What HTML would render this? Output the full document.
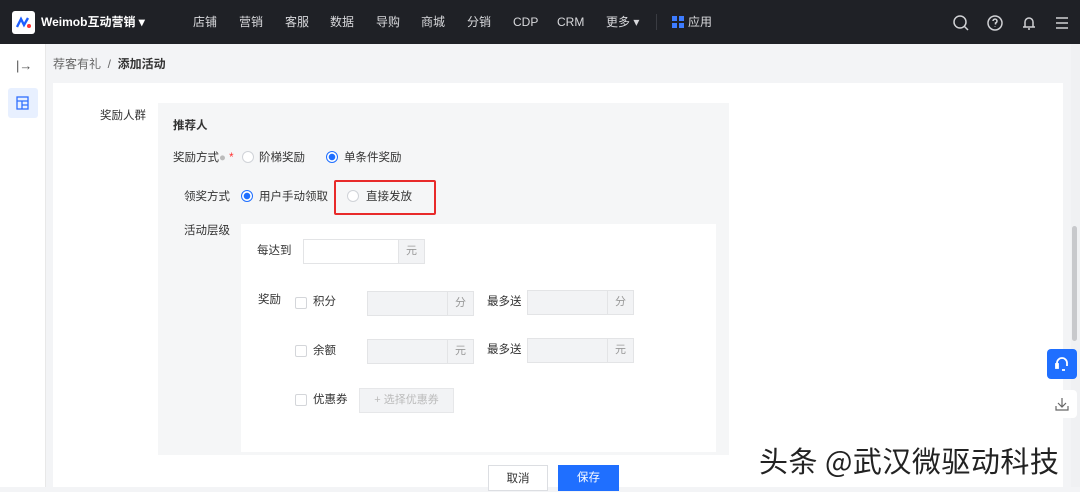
<!DOCTYPE html>
<html><head><meta charset="utf-8"><style>
*{margin:0;padding:0;box-sizing:border-box}
body{width:1080px;height:487px;overflow:hidden;background:#f3f4f6;font-family:"Liberation Sans","Noto Sans CJK SC",sans-serif;font-size:12px;color:#333;position:relative;line-height:14px}
.abs{position:absolute}
.nav{left:0;top:0;width:1080px;height:44px;background:#1f2126;color:#d8d9dc;font-size:12px}
.nav span{position:absolute;top:15px}
.side{left:0;top:44px;width:46px;height:443px;background:#fff;border-right:1px solid #e8e8e8}
.card{left:53px;top:83px;width:1010px;height:404px;background:#fff}
.panel{left:158px;top:103px;width:571px;height:352px;background:#f5f6f7}
.inner{left:241px;top:224px;width:475px;height:228px;background:#fff}
.radio{width:12px;height:12px;border-radius:50%;border:1px solid #d0d3d8;background:#fff}
.radio.on{border-color:#1f6fff;background:radial-gradient(circle,#1f6fff 0 3px,#fff 3.5px)}
.cb{width:12px;height:12px;border:1px solid #d4d6da;background:#fff;border-radius:2px}
.inp{height:25px;border:1px solid #e3e4e6;background:#f2f3f5}
.unit{position:absolute;right:0;top:0;width:26px;height:23px;border-left:1px solid #e3e4e6;color:#999;text-align:center;line-height:23px;font-size:11px;background:#f2f3f5}
.t{font-size:11.5px;color:#333}
</style></head><body>
<div class="abs nav">
 <div class="abs" style="left:12px;top:11px;width:23px;height:23px;background:#fff;border-radius:3px"><svg width="23" height="23"><path d="M5 16 L9 8 L12 14 L16 7" stroke="#1f5fff" stroke-width="2.4" fill="none"/><circle cx="17" cy="15" r="2" fill="#f33"/></svg></div>
 <span style="left:41px;color:#fff;font-weight:bold">Weimob互动营销 ▾</span>
 <span style="left:193px">店铺</span><span style="left:239px">营销</span><span style="left:285px">客服</span><span style="left:330px">数据</span><span style="left:376px">导购</span><span style="left:421px">商城</span><span style="left:467px">分销</span><span style="left:513px">CDP</span><span style="left:557px">CRM</span><span style="left:606px">更多 ▾</span>
 <div class="abs" style="left:656px;top:14px;width:1px;height:16px;background:#3a3c42"></div>
 <svg class="abs" style="left:672px;top:16px" width="12" height="12"><rect x="0" y="0" width="5" height="5" fill="#3d7cff"/><rect x="7" y="0" width="5" height="5" fill="#3d7cff"/><rect x="0" y="7" width="5" height="5" fill="#3d7cff"/><rect x="7" y="7" width="5" height="5" fill="#3d7cff"/></svg>
 <span style="left:688px">应用</span>
 <svg class="abs" style="left:952px;top:14px" width="120" height="18" fill="none" stroke="#d0d1d4" stroke-width="1.5"><circle cx="8" cy="8" r="6"/><path d="M12.5 12.5 L16 16"/><circle cx="43" cy="9" r="7"/><path d="M41 7a2 2 0 1 1 2.5 2v1.5M43 12.5v.5"/><path d="M71 13h12M73 13V8a4 4 0 0 1 8 0v5M76 15h2"/><path d="M104 4h12M104 9h12M104 14h12"/></svg>
</div>
<div class="abs side">
 <div class="abs" style="left:16px;top:15px;font-size:13px;color:#555">|→</div>
 <div class="abs" style="left:8px;top:44px;width:30px;height:30px;background:#e8f0ff;border-radius:3px"><svg width="30" height="30" fill="none" stroke="#2f6fff" stroke-width="1.3"><rect x="9" y="9" width="11" height="12"/><path d="M9 13h11M14 13v8M14 17h6"/></svg></div>
</div>
<div class="abs" style="left:53px;top:57px;color:#666;font-size:12px">荐客有礼 &nbsp;/&nbsp; <b style="color:#333">添加活动</b></div>
<div class="abs card"></div>
<div class="abs t" style="left:100px;top:109px">奖励人群</div>
<div class="abs panel"></div>
<div class="abs t" style="left:173px;top:119px;font-weight:bold">推荐人</div>
<div class="abs t" style="left:173px;top:151px">奖励方式<span style="color:#bbb">●</span> <span style="color:#f33">*</span></div>
<div class="abs radio" style="left:242px;top:151px"></div><div class="abs t" style="left:259px;top:151px">阶梯奖励</div>
<div class="abs radio on" style="left:326px;top:151px"></div><div class="abs t" style="left:344px;top:151px">单条件奖励</div>
<div class="abs t" style="left:184px;top:190px">领奖方式</div>
<div class="abs radio on" style="left:241px;top:190px"></div><div class="abs t" style="left:259px;top:190px">用户手动领取</div>
<div class="abs" style="left:334px;top:180px;width:102px;height:35px;border:2px solid #e82a2a;border-radius:2px"></div>
<div class="abs radio" style="left:347px;top:190px"></div><div class="abs t" style="left:366px;top:190px">直接发放</div>
<div class="abs t" style="left:184px;top:224px">活动层级</div>
<div class="abs inner"></div>
<div class="abs t" style="left:257px;top:244px">每达到</div>
<div class="abs inp" style="left:303px;top:239px;width:122px;background:#fff"><div class="unit">元</div></div>
<div class="abs t" style="left:258px;top:293px">奖励</div>
<div class="abs cb" style="left:295px;top:297px"></div><div class="abs t" style="left:313px;top:295px">积分</div>
<div class="abs inp" style="left:367px;top:291px;width:107px"><div class="unit">分</div></div>
<div class="abs t" style="left:487px;top:295px">最多送</div>
<div class="abs inp" style="left:527px;top:290px;width:107px"><div class="unit">分</div></div>
<div class="abs cb" style="left:295px;top:345px"></div><div class="abs t" style="left:313px;top:344px">余额</div>
<div class="abs inp" style="left:367px;top:339px;width:107px"><div class="unit">元</div></div>
<div class="abs t" style="left:487px;top:343px">最多送</div>
<div class="abs inp" style="left:527px;top:338px;width:107px"><div class="unit">元</div></div>
<div class="abs cb" style="left:295px;top:394px"></div><div class="abs t" style="left:313px;top:393px">优惠券</div>
<div class="abs" style="left:359px;top:388px;width:95px;height:25px;background:#f2f3f5;border:1px solid #e6e7e9;color:#bbb;font-size:11px;line-height:23px;text-align:center">+ 选择优惠券</div>
<div class="abs" style="left:488px;top:465px;width:60px;height:26px;border:1px solid #dcdee2;background:#fff;text-align:center;line-height:26px;font-size:11.5px">取消</div>
<div class="abs" style="left:558px;top:465px;width:61px;height:26px;background:#1f6fff;color:#fff;text-align:center;line-height:26px;font-size:11.5px">保存</div>
<div class="abs" style="left:1071px;top:44px;width:9px;height:443px;background:#f0f1f3"></div>
<div class="abs" style="left:1072px;top:226px;width:5px;height:115px;background:#c8c9cc;border-radius:3px"></div>
<div class="abs" style="left:1047px;top:349px;width:30px;height:30px;background:#1f6fff;border-radius:4px"><svg width="30" height="30" fill="none" stroke="#fff" stroke-width="1.8"><path d="M10 17v-3a5 5 0 0 1 10 0v3M15 21h3"/><rect x="9" y="15" width="2" height="4" fill="#fff"/></svg></div>
<div class="abs" style="left:1047px;top:390px;width:30px;height:28px;background:#fff;border-radius:4px"><svg width="30" height="28" fill="none" stroke="#666" stroke-width="1.2"><path d="M15 8v9M11 13l4 4 4-4M9 16v4h12v-4"/></svg></div>
<div class="abs" style="left:759px;top:444px;font-size:29px;line-height:32px;letter-spacing:0.5px;color:#222;font-family:'Noto Sans CJK SC',sans-serif;text-shadow:0 0 2px #fff,0 0 2px #fff">头条 @武汉微驱动科技</div>
</body></html>
